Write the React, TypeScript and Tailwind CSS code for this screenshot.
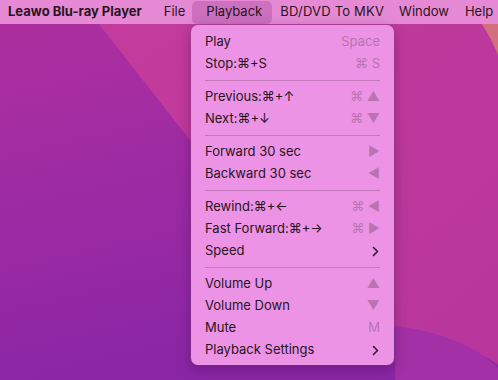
import React from "react"

type Item =
  | { sep: true }
  | { label: string; key?: string; sub?: boolean; sep?: false }

const items: Item[] = [
  { label: "Play", key: "Space" },
  { label: "Stop:⌘+S", key: "⌘ S" },
  { sep: true },
  { label: "Previous:⌘+↑", key: "⌘ ▲" },
  { label: "Next:⌘+↓", key: "⌘ ▼" },
  { sep: true },
  { label: "Forward 30 sec", key: "▶" },
  { label: "Backward 30 sec", key: "◀" },
  { sep: true },
  { label: "Rewind:⌘+←", key: "⌘ ◀" },
  { label: "Fast Forward:⌘+→", key: "⌘ ▶" },
  { label: "Speed", sub: true },
  { sep: true },
  { label: "Volume Up", key: "▲" },
  { label: "Volume Down", key: "▼" },
  { label: "Mute", key: "M" },
  { label: "Playback Settings", sub: true },
]

function Chevron() {
  return (
    <svg width="7" height="11" viewBox="0 0 7 11" className="mr-[1px]">
      <path d="M1.5 1.5 L5.5 5.5 L1.5 9.5" fill="none" stroke="#2a1a2a" strokeWidth="1.6" strokeLinecap="round" strokeLinejoin="round" />
    </svg>
  )
}

function Wallpaper() {
  return (
    <svg className="absolute inset-0" width="498" height="380" viewBox="0 0 498 380">
      <defs>
        <linearGradient id="base" x1="0" y1="0" x2="0.3" y2="1">
          <stop offset="0" stopColor="#b0309f" />
          <stop offset="1" stopColor="#8a26a6" />
        </linearGradient>
        <linearGradient id="mag" x1="0" y1="0" x2="1" y2="1">
          <stop offset="0" stopColor="#c43c9c" />
          <stop offset="1" stopColor="#b8369c" />
        </linearGradient>
      </defs>
      <rect width="498" height="380" fill="url(#base)" />
      <path d="M80 0 L498 0 L498 365 C470 345 430 332 395 328 L190 140 Z" fill="url(#mag)" />
      <path d="M395 326 C440 332 475 345 498 368 L498 380 L395 380 Z" fill="#a330a6" />
      <path d="M462 0 L498 0 L498 55 C490 35 478 16 462 0 Z" fill="#d27080" />
    </svg>
  )
}

export default function App() {
  return (
    <div
      className="relative w-[498px] h-[380px] overflow-hidden text-[13px]"
      style={{ fontFamily: "Inter, 'Noto Sans', sans-serif" }}
    >
      <Wallpaper />

      {/* menu bar */}
      <div className="relative flex items-center h-[24px] bg-[#e68ad6] text-[#2a1420] whitespace-nowrap">
        <span className="ml-[8px] font-bold">Leawo Blu-ray Player</span>
        <span className="ml-[22px]">File</span>
        <span className="ml-[7px] pl-[14px] pr-[10px] h-[23px] flex items-center rounded-[5px] bg-[#cd70be]">Playback</span>
        <span className="ml-[8px] tracking-[0.2px]">BD/DVD To MKV</span>
        <span className="ml-[15px]">Window</span>
        <span className="ml-[16px]">Help</span>
      </div>

      {/* dropdown */}
      <div className="absolute left-[191px] top-[25px] w-[203px] pt-[6px] pb-[4px] rounded-[7px] bg-[#ec93e6] shadow-[0_4px_14px_rgba(60,0,60,0.35),0_0_0_0.5px_rgba(170,80,160,0.5)] text-[#2a1420]">
        {items.map((it, i) =>
          it.sep ? (
            <div key={i} className="h-[11px] flex items-center px-[14px]">
              <div className="h-px w-full bg-[#c277b8]" />
            </div>
          ) : (
            <div key={i} className="h-[22px] flex items-center justify-between pl-[14px] pr-[14px] whitespace-nowrap">
              <span>{it.label}</span>
              {it.sub ? (
                <Chevron />
              ) : (
                <span className="text-[#b973b0]">{it.key}</span>
              )}
            </div>
          )
        )}
      </div>
    </div>
  )
}
